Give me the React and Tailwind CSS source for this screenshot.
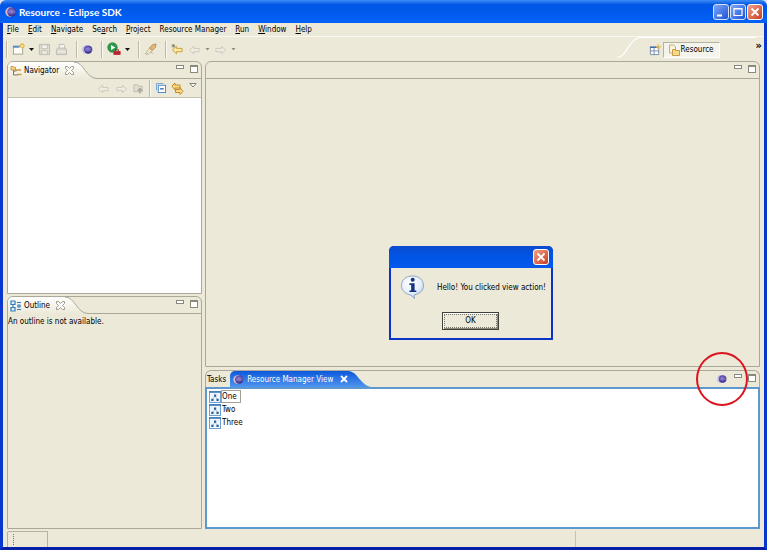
import React from "react";

const FONT = "font-['DejaVu_Sans_Condensed','Noto_Sans',sans-serif]";

function EclipseIcon({ className = "size-[11px]", halo = "#b9b4e6" }) {
  return (
    <svg viewBox="0 0 12 12" className={className} aria-hidden="true">
      <defs>
        <radialGradient id="orb" cx=".45" cy=".4" r=".65">
          <stop offset="0" stopColor="#8c80d0" />
          <stop offset=".6" stopColor="#5344a6" />
          <stop offset="1" stopColor="#342878" />
        </radialGradient>
      </defs>
      <circle cx="5" cy="6" r="4.7" fill={halo} />
      <circle cx="6.8" cy="6" r="4.5" fill="url(#orb)" />
      <path d="M3 5.200h7.600M3 6.800h7.600" stroke="#a39bdc" strokeWidth=".5" />
    </svg>
  );
}

function NewIcon() {
  return (
    <svg viewBox="0 0 14 14" className="size-[13px]" aria-hidden="true">
      <rect x="1.500" y="3.500" width="10" height="8.500" fill="#fdfdf5" stroke="#a5a288" />
      <path d="M1 4h7" stroke="#5c8cc4" strokeWidth="2" />
      <path d="M11 0v6M8 3h6M9 1l4 4M13 1l-4 4" stroke="#e0b23c" strokeWidth="1.100" />
      <circle cx="11" cy="3" r="1.200" fill="#fff2a8" />
    </svg>
  );
}

function SaveIcon() {
  return (
    <svg viewBox="0 0 14 14" className="size-[13px]" aria-hidden="true">
      <path d="M1.500 1.500h11v11h-11z" fill="#dddbd0" stroke="#bdbaad" />
      <path d="M4 2h6v4H4zM4 8.500h6V12H4z" fill="#f2f1ea" stroke="#bdbaad" strokeWidth=".8" />
    </svg>
  );
}

function PrintIcon() {
  return (
    <svg viewBox="0 0 14 14" className="size-[13px]" aria-hidden="true">
      <path d="M4.500 7V1.500h5L10.500 3v4" fill="#f4f3ee" stroke="#bdbaad" />
      <path d="M1.500 7.500l1.500-2h8l1.500 2v5h-11z" fill="#dcdad0" stroke="#bdbaad" />
      <path d="M3 9.500h8" stroke="#f4f3ee" />
    </svg>
  );
}

function RunIcon() {
  return (
    <svg viewBox="0 0 14 14" className="size-[14px]" aria-hidden="true">
      <circle cx="5.500" cy="5.500" r="4.800" fill="#2f9a4c" stroke="#207a38" strokeWidth=".6" />
      <path d="M4 3v5l4.200-2.500z" fill="#fff" />
      <path d="M6.500 9h7v4h-7z" fill="#c8323a" />
      <path d="M8.500 9V7.800h3V9M6.500 10.800h7" fill="none" stroke="#8e1c24" strokeWidth=".8" />
    </svg>
  );
}

function TorchIcon() {
  return (
    <svg viewBox="0 0 14 14" className="size-[13px]" aria-hidden="true">
      <path d="M2.500 10.500L6 5.500l3 2.500-4.500 4z" fill="#f3ead0" stroke="#b8a67e" strokeWidth=".8" />
      <path d="M6 5.500l3-3.500 4-1-.500 3.500L9 8z" fill="#e3b873" stroke="#ab8650" strokeWidth=".8" />
      <path d="M7.500 9.500l2 2M1.500 11l1.500 2" stroke="#a9a08c" />
    </svg>
  );
}

function Arrow({ dir = "left", tone = "dim", star = false }) {
  const stroke = tone === "gold" ? "#c79a33" : "#c9c6b8";
  const fill = tone === "gold" ? "#fbe9a4" : "#efede2";
  return (
    <svg viewBox="0 0 14 12" className="h-[11px] w-[13px]" aria-hidden="true">
      <path
        d={dir === "left" ? "M1.500 6.500l4.500-4v2.300h6v3.600H6v2.300z" : "M12.500 6.500l-4.500-4v2.300H2v3.600h6v2.300z"}
        fill={fill}
        stroke={stroke}
      />
      {star && <path d="M2.500 0v4M.5 2h4M1 .5l3 3M4 .5l-3 3" stroke="#6f6b50" strokeWidth=".7" />}
    </svg>
  );
}

function Caret({ dim = false }) {
  return (
    <svg viewBox="0 0 5 3" className="h-[3px] w-[5px]" aria-hidden="true">
      <path d={dim ? "M.5 0h4L2.500 2.500z" : "M0 0h5L2.500 3z"} fill={dim ? "#8f8c7e" : "#111"} />
    </svg>
  );
}

function TreeIcon() {
  return (
    <svg viewBox="0 0 12 12" className="size-[12px]" aria-hidden="true">
      <path d="M3.500 5v5h4M3.500 6h3" fill="none" stroke="#7a7768" />
      <path d="M1 1.500h2l.5.800H5.500v2.700H1z" fill="#f7d98a" stroke="#b98a2e" strokeWidth=".8" />
      <path d="M6 5h5M7 9.500h4.500" stroke="#c99a3c" strokeWidth="1.600" />
    </svg>
  );
}

function OutlineIcon() {
  return (
    <svg viewBox="0 0 12 12" className="size-[12px]" fill="none" aria-hidden="true">
      <path d="M1 1h4v3.500H1zM1 7.500h4V11H1z" fill="#e4f0fa" stroke="#2f7dbd" strokeWidth="1.200" />
      <path d="M7 2.500h4M7 9.500h4M8 5h2v2h-2z" stroke="#2f7dbd" strokeWidth="1.200" />
      <path d="M3 4.500v3" stroke="#2f7dbd" />
    </svg>
  );
}

function NodeIcon() {
  return (
    <svg viewBox="0 0 12 12" className="size-[12px] shrink-0" aria-hidden="true">
      <rect x=".5" y=".5" width="11" height="11" fill="#eef5fc" stroke="#6f9fce" />
      <path d="M0 1h12" stroke="#3c78b8" strokeWidth="1.600" />
      <path d="M6 4.500L3.500 9M6 4.500L8.500 9" stroke="#8fb2d6" strokeWidth=".7" />
      <path d="M5 3.500h2.200v2.200H5zM2.300 7.800h2.200V10H2.300zM7.500 7.800h2.200V10H7.500z" fill="#2b5f96" />
    </svg>
  );
}

function CloseOutline() {
  return (
    <svg viewBox="0 0 9 9" className="size-[9px]" aria-hidden="true">
      <path
        d="M.5.5h2l2 2 2-2h2v2l-2 2 2 2v2h-2l-2-2-2 2h-2v-2l2-2-2-2z"
        fill="#fbfaf5"
        stroke="#8a887c"
        strokeWidth=".8"
      />
    </svg>
  );
}

function PaneButtons() {
  return (
    <div className="flex items-start gap-[6px] pr-[3px] pt-[3px]">
      <button aria-label="Minimize" className="h-[4px] w-[8px] border border-[#8a887c] bg-white" />
      <button aria-label="Maximize" className="h-[8px] w-[8px] border border-t-2 border-[#8a887c] bg-white" />
    </div>
  );
}

function PaneTab({ icon, label }) {
  return (
    <div className="flex h-[17px]">
      <button className="flex items-center gap-[2px] rounded-tl-[5px] bg-linear-to-b from-white to-[#ece9d8] pl-[2px]">
        {icon}
        <span className="pt-px">{label}</span>
        <span className="ml-[4px]">
          <CloseOutline />
        </span>
      </button>
      <svg viewBox="0 0 28 17" className="h-[17px] w-[28px] shrink-0" aria-hidden="true">
        <defs>
          <linearGradient id="tabfade" x1="0" y1="0" x2="0" y2="1">
            <stop offset="0" stopColor="#fff" />
            <stop offset="1" stopColor="#ece9d8" />
          </linearGradient>
        </defs>
        <path d="M0 0C10 0 12 16.500 23 16.500H28V17H0z" fill="url(#tabfade)" />
        <path d="M0 0C10 0 12 16.500 23 16.500H28" fill="none" stroke="#aca899" />
      </svg>
      <div className="flex flex-1 justify-end border-b border-[#aca899]">
        <PaneButtons />
      </div>
    </div>
  );
}

function Sep({ className = "" }) {
  return <div className={`h-[17px] w-[2px] border-l border-r border-l-[#bdbaaa] border-r-[#f8f7f0] ${className}`} />;
}

const menus = [
  ["", "F", "ile"],
  ["", "E", "dit"],
  ["", "N", "avigate"],
  ["Se", "a", "rch"],
  ["", "P", "roject"],
  ["Resource Manager", "", ""],
  ["", "R", "un"],
  ["", "W", "indow"],
  ["", "H", "elp"],
];

function TitleButton({ label, red = false, children }) {
  return (
    <button
      aria-label={label}
      className={
        red
          ? "grid size-[16px] place-items-center rounded-[3px] border border-white bg-linear-to-br from-[#f0a088] to-[#c8381a]"
          : "grid size-[16px] place-items-center rounded-[3px] border border-[#d5e2fb] bg-linear-to-br from-[#7fa5f5] to-[#1c50d8]"
      }
    >
      <svg viewBox="0 0 12 12" className="size-[12px]" fill="none" stroke="#fff" aria-hidden="true">
        {children}
      </svg>
    </button>
  );
}

const CROSS = <path d="M2.500 2.500l7 7M9.500 2.500l-7 7" strokeWidth="1.800" />;

function MessageDialog() {
  return (
    <div
      role="dialog"
      aria-label="Message"
      className="absolute left-[389px] top-[246px] w-[164px] rounded-t-[5px] bg-[#0a34c4] px-[2px] pb-[2px]"
    >
      <div className="-mx-[2px] flex h-[22px] items-center justify-end rounded-t-[5px] bg-linear-to-b from-[#0a4bd0] via-[#0055e6] to-[#0458ea] pr-[4px]">
        <TitleButton label="Close" red>
          {CROSS}
        </TitleButton>
      </div>
      <div className="flex h-[70px] flex-col bg-[#ece9d8]">
        <div className="flex items-center gap-[12px] pl-[9px] pt-[7px]">
          <svg viewBox="0 0 26 26" className="size-[25px]" aria-hidden="true">
            <defs>
              <radialGradient id="bubble" cx=".4" cy=".3" r=".8">
                <stop offset="0" stopColor="#fff" />
                <stop offset=".6" stopColor="#e4eefa" />
                <stop offset="1" stopColor="#9ab8de" />
              </radialGradient>
            </defs>
            <path
              d="M13 1C6 1 1.500 5.500 1.500 11c0 4.800 3.600 8.300 8.500 9.500 1.800.5 3 1.800 5 4-.2-1.600-.2-2.800.3-4 5.500-1 9.200-4.600 9.200-9.500C24.500 5.500 20 1 13 1z"
              fill="url(#bubble)"
              stroke="#8fa3bd"
            />
            <circle cx="13.200" cy="5" r="2.100" fill="#16337e" />
            <path d="M9.800 8.500h5.400v7.500h1.800v1.800H9.800V16h1.800v-5.700H9.800z" fill="#16337e" />
          </svg>
          <p className="pt-px">Hello! You clicked view action!</p>
        </div>
        <button className="ml-[51px] mt-[12px] h-[18px] w-[57px] border border-[#403f38] bg-[#ece9d8] p-px shadow-[inset_1px_1px_0_#fff,inset_-1px_-1px_0_#8a887a]">
          <span className="flex h-full items-center justify-center border border-dotted border-[#77756a]">OK</span>
        </button>
      </div>
    </div>
  );
}

export default function App() {
  return (
    <div className="bg-[#dfe3f5]">
      <div
        className={`relative flex min-h-screen flex-col overflow-hidden rounded-t-[6px] bg-[#ece9d8] text-[8px] leading-[12px] text-black ${FONT}`}
      >
        <header className="flex h-[23px] items-center bg-linear-to-b from-[#3c8cf5] via-[#0055e5] via-20% to-[#0462f8] pl-[5px] pr-[4px]">
          <EclipseIcon className="size-[12px]" halo="#d9b8c4" />
          <h1 className="ml-[2px] flex-1 pt-px font-['Lato',sans-serif] text-[10px] font-bold text-white">Resource - Eclipse SDK</h1>
          <div className="flex gap-[1px]">
            <TitleButton label="Minimize window">
              <path d="M2 9.500h5" strokeWidth="2" />
            </TitleButton>
            <TitleButton label="Maximize window">
              <path d="M2 2.500h8v7H2zM2 3h8" strokeWidth="1.200" />
            </TitleButton>
            <TitleButton label="Close window" red>
              {CROSS}
            </TitleButton>
          </div>
        </header>

        <div className="flex flex-1 flex-col border-x-[3px] border-b-[3px] border-x-[#0a36d0] border-b-[#0420a4]">
          <nav className="flex h-[14px] items-center gap-[9px] border-b border-[#f8f7f0] pl-[4px]">
            {menus.map(([a, key, b]) => (
              <button key={a + key + b} className="whitespace-nowrap">
                {a}
                <span className="underline">{key}</span>
                {b}
              </button>
            ))}
          </nav>

          <div className="flex h-[24px] items-center">
            <div className="flex items-center gap-[4px] pl-[3px]">
              <Sep />
              <button aria-label="New"><NewIcon /></button>
              <button aria-label="New menu"><Caret /></button>
              <button aria-label="Save"><SaveIcon /></button>
              <button aria-label="Print"><PrintIcon /></button>
              <Sep className="ml-[4px]" />
              <button aria-label="Sample action"><EclipseIcon /></button>
              <Sep className="ml-[4px]" />
              <button aria-label="Run tool"><RunIcon /></button>
              <button aria-label="Run tool menu"><Caret /></button>
              <Sep className="ml-[4px]" />
              <button aria-label="Search"><TorchIcon /></button>
              <Sep className="ml-[4px]" />
              <button aria-label="Last edit"><Arrow tone="gold" star /></button>
              <button aria-label="Back"><Arrow /></button>
              <button aria-label="Back menu"><Caret dim /></button>
              <button aria-label="Forward"><Arrow dir="right" /></button>
              <button aria-label="Forward menu"><Caret dim /></button>
            </div>
            <div className="flex flex-1 items-stretch justify-end self-stretch">
              <svg viewBox="0 0 24 24" className="h-[24px] w-[24px]" fill="none" aria-hidden="true">
                <path d="M0 20.500c10 0 12-20 24-20" stroke="#fff" strokeWidth="1.200" />
              </svg>
              <div className="flex w-[115px] items-center border-t border-white pl-[8px]">
                <button aria-label="Open perspective">
                  <svg viewBox="0 0 13 13" className="size-[12px]" fill="none" aria-hidden="true">
                    <path d="M1.500 3.500h9v8h-9zM1.500 7.500h9M5.500 4v7.500" fill="#fff" stroke="#7289a8" />
                    <path d="M1 3.500h7" stroke="#3f6fae" strokeWidth="1.500" />
                    <path d="M10 0v6M7.500 3h5.500" stroke="#dcae3c" />
                  </svg>
                </button>
                <button className="ml-[2px] flex h-[16px] w-[57px] items-center gap-px border border-[#b5b2a2] border-b-white border-r-white bg-[#f5f4ec] pl-[4px]">
                  <svg viewBox="0 0 12 12" className="size-[12px]" aria-hidden="true">
                    <path d="M1.500 1h4l2 2v6h-6z" fill="#fdf6df" stroke="#b99b57" strokeWidth=".8" />
                    <path d="M4.500 5.500h2.500l.7 1h3.800v5h-7z" fill="#f8d98a" stroke="#b98a2e" strokeWidth=".8" />
                  </svg>
                  <span>Resource</span>
                </button>
              </div>
              <button aria-label="More perspectives" className="mr-[2px] mt-[3px] self-start text-[11px] font-bold">»</button>
            </div>
          </div>

          <main className="flex flex-1 gap-[3px] px-[4px]">
            <div className="flex w-[195px] shrink-0 flex-col gap-[2px]">
              <section className="flex flex-1 flex-col rounded-t-[6px] border border-[#aca899]">
                <PaneTab icon={<TreeIcon />} label="Navigator" />
                <div className="flex h-[19px] items-center justify-end gap-[5px] border-b border-[#c5c2b2] pr-[4px]">
                  <button aria-label="Back"><Arrow /></button>
                  <button aria-label="Forward"><Arrow dir="right" /></button>
                  <button aria-label="Up">
                    <svg viewBox="0 0 12 12" className="size-[11px]" aria-hidden="true">
                      <path d="M1 2h4l1 1.500h4v6H1z" fill="#e2dfd4" stroke="#bcb9ac" />
                      <path d="M7.500 11.500V6M5 8.500L7.500 6 10 8.500" fill="none" stroke="#a9a699" strokeWidth="1.500" />
                    </svg>
                  </button>
                  <Sep />
                  <button aria-label="Collapse all">
                    <svg viewBox="0 0 11 11" className="size-[10px]" aria-hidden="true">
                      <path d="M.5 8V.5H8" fill="none" stroke="#6f9fce" />
                      <rect x="2.500" y="2.500" width="8" height="8" fill="#fff" stroke="#3f86c4" />
                      <path d="M4.500 6.500h4" stroke="#1c5a9c" strokeWidth="1.300" />
                    </svg>
                  </button>
                  <button aria-label="Link with editor">
                    <svg viewBox="0 0 13 13" className="size-[13px]" fill="#fbdc8c" stroke="#c68a1e" aria-hidden="true">
                      <path d="M1 4l3-3v2h5v3H4v2zM12 9.500l-3 3v-2H4.500v-3H9v-2z" />
                    </svg>
                  </button>
                  <button aria-label="View menu" className="mb-[6px]">
                    <svg viewBox="0 0 8 5" className="h-[5px] w-[8px]" aria-hidden="true">
                      <path d="M.8.5h6.400L4 4z" fill="#fff" stroke="#77756a" strokeWidth=".9" />
                    </svg>
                  </button>
                </div>
                <div className="flex-1 bg-white" />
              </section>
              <section className="flex flex-1 flex-col rounded-t-[6px] border border-[#aca899]">
                <PaneTab icon={<OutlineIcon />} label="Outline" />
                <p className="mt-[2px]">An outline is not available.</p>
              </section>
            </div>

            <div className="flex flex-1 flex-col gap-[3px]">
              <section className="flex-1 rounded-t-[6px] border border-[#aca899]">
                <div className="flex h-[17px] justify-end border-b border-[#aca899]">
                  <PaneButtons />
                </div>
              </section>
              <section className="rounded-t-[6px] border border-b-0 border-[#aca899]">
                <div className="flex h-[16px]">
                  <button className="px-px pt-px">Tasks</button>
                  <button className="ml-[3px] flex items-center gap-[3px] rounded-tl-[5px] bg-linear-to-b from-[#0a58dc] to-[#4f94ee] pl-[3px] text-white">
                    <EclipseIcon halo="#d9b8c4" />
                    <span className="pt-px">Resource Manager View</span>
                    <svg viewBox="0 0 8 8" className="ml-[4px] size-[8px]" aria-hidden="true">
                      <path d="M1 1l6 6M7 1L1 7" stroke="#fff" strokeWidth="1.800" />
                    </svg>
                  </button>
                  <svg viewBox="0 0 24 16" className="h-[16px] w-[24px]" aria-hidden="true">
                    <defs>
                      <linearGradient id="activefade" x1="0" y1="0" x2="0" y2="1">
                        <stop offset="0" stopColor="#0a58dc" />
                        <stop offset="1" stopColor="#4f94ee" />
                      </linearGradient>
                    </defs>
                    <path d="M0 0C10 0 12 15 24 16H0z" fill="url(#activefade)" />
                  </svg>
                  <div className="flex flex-1 justify-end">
                    <div className="relative mr-[7px] flex items-center">
                      <button aria-label="View action"><EclipseIcon className="size-[10px]" /></button>
                      <div className="pointer-events-none absolute left-1/2 top-1/2 z-10 h-[54px] w-[52px] -translate-x-1/2 -translate-y-1/2 rounded-[50%] border-2 border-[#dc1420]" />
                    </div>
                    <PaneButtons />
                  </div>
                </div>
                <ul className="-mx-px h-[142px] border-2 border-[#5f97cf] bg-white px-[2px] py-px">
                  {["One", "Two", "Three"].map((name, i) => (
                    <li key={name}>
                      <button className="flex h-[13px] items-center">
                        <NodeIcon />
                        <span
                          className={
                            i === 0
                              ? "h-[13px] w-[20px] border border-[#a3a196] text-left"
                              : "h-[13px] border border-transparent"
                          }
                        >
                          {name}
                        </span>
                      </button>
                    </li>
                  ))}
                </ul>
              </section>
            </div>
          </main>

          <footer className="flex h-[18px] pl-[4px] pt-[2px]">
            <div className="w-[41px] rounded-tl-[2px] border-l border-r border-t border-[#b5b2a2] px-[5px] py-[2px]">
              <div className="h-full w-0 border-l border-dotted border-[#77756a]" />
            </div>
            <div className="flex-1 border-r border-[#c5c2b2]" />
            <div className="w-[188px]" />
          </footer>
        </div>

        <MessageDialog />
      </div>
    </div>
  );
}
